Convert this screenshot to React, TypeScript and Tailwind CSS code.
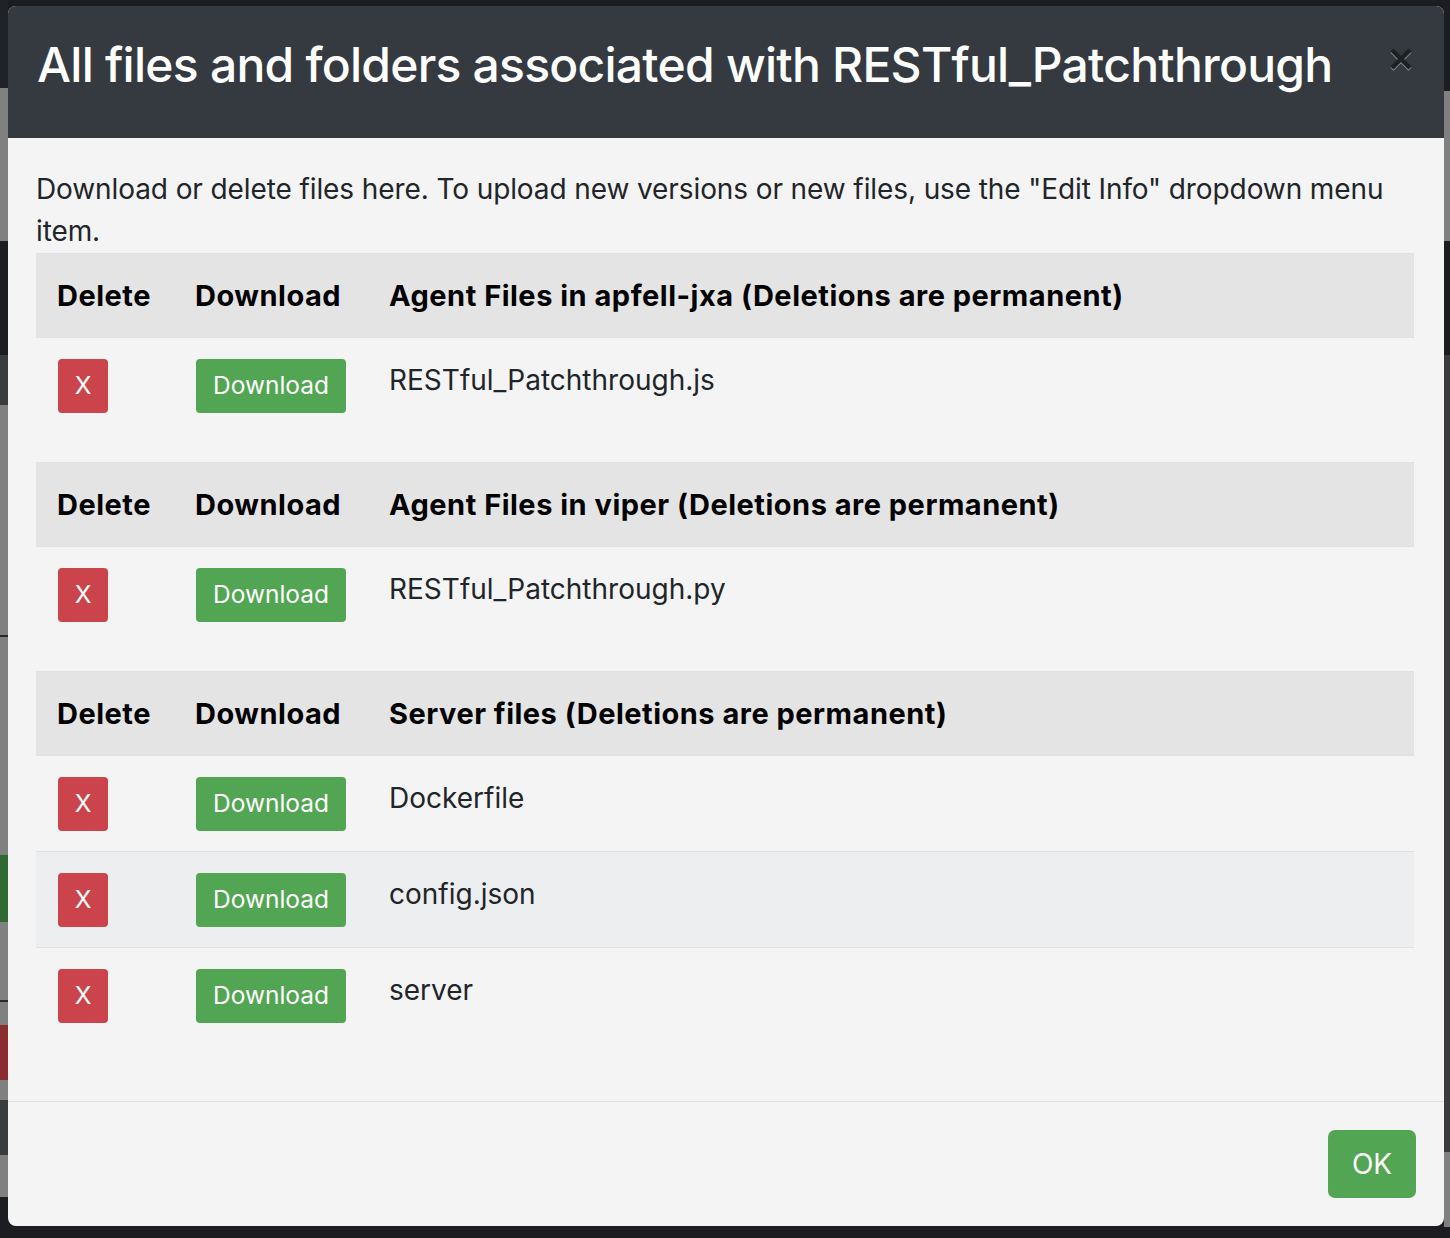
import React from "react";

const font = { fontFamily: "Inter, 'Noto Sans', sans-serif" };

type Section = { title: string; files: string[] };

const sections: Section[] = [
  { title: "Agent Files in apfell-jxa (Deletions are permanent)", files: ["RESTful_Patchthrough.js"] },
  { title: "Agent Files in viper (Deletions are permanent)", files: ["RESTful_Patchthrough.py"] },
  { title: "Server files (Deletions are permanent)", files: ["Dockerfile", "config.json", "server"] },
];

function FileTable({ section }: { section: Section }) {
  return (
    <table className="w-full border-collapse mb-[29px] table-fixed">
      <colgroup>
        <col className="w-[138px]" />
        <col className="w-[194px]" />
        <col />
      </colgroup>
      <thead>
        <tr className="bg-[#e4e4e4]">
          <th className="px-[21px] py-[20.5px] text-left font-bold text-[29px] tracking-[0.5px] leading-[42px] text-black border-t border-b border-[#dee2e6]">
            Delete
          </th>
          <th className="px-[21px] py-[20.5px] text-left font-bold text-[29px] tracking-[0.5px] leading-[42px] text-black border-t border-b border-[#dee2e6]">
            Download
          </th>
          <th className="px-[21px] py-[20.5px] text-left font-bold text-[29px] tracking-[0.5px] leading-[42px] text-black border-t border-b border-[#dee2e6] whitespace-nowrap">
            {section.title}
          </th>
        </tr>
      </thead>
      <tbody>
        {section.files.map((f, i) => (
          <tr key={f} className={i % 2 === 1 ? "bg-[#edeef0]" : ""}>
            <td className="px-[21px] py-[20.5px] align-top border-t border-[#dee2e6]">
              <button className="ml-[1px] w-[50px] h-[54px] flex items-center justify-center rounded-[4px] bg-[#cc444b] text-white text-[24.5px] leading-none">
                X
              </button>
            </td>
            <td className="px-[21px] py-[20.5px] align-top border-t border-[#dee2e6]">
              <button className="ml-[1px] w-[150px] h-[54px] flex items-center justify-center rounded-[4px] bg-[#52a552] text-white text-[24.5px] leading-none">
                Download
              </button>
            </td>
            <td className="px-[21px] py-[20.5px] align-top border-t border-[#dee2e6] text-[28px] leading-[42px] text-[#212529]">
              {f}
            </td>
          </tr>
        ))}
      </tbody>
    </table>
  );
}

export default function App() {
  return (
    <div style={font} className="relative w-[1450px] h-[1238px] bg-[#1c1d20] overflow-hidden">
      {/* dimmed page behind the modal */}
      <div className="flex h-full">
        <div className="w-[8px] flex flex-col">
          <div className="h-[88px] bg-[#1f2226]" />
          <div className="h-[153px] bg-[#808080]" />
          <div className="h-[114px] bg-[#1c1d20]" />
          <div className="h-[50px] bg-[#393c3f]" />
          <div className="h-[230px] bg-[#808080]" />
          <div className="h-[2px] bg-[#2a2a2a]" />
          <div className="h-[218px] bg-[#808080]" />
          <div className="h-[67px] bg-[#2f6a33]" />
          <div className="h-[78px] bg-[#808080]" />
          <div className="h-[2px] bg-[#2a2a2a]" />
          <div className="h-[23px] bg-[#808080]" />
          <div className="h-[55px] bg-[#8b2c31]" />
          <div className="h-[20px] bg-[#808080]" />
          <div className="h-[55px] bg-[#393c3f]" />
          <div className="h-[42px] bg-[#808080]" />
          <div className="flex-1 bg-[#1c1d20]" />
        </div>
        <div className="flex-1" />
        <div className="w-[6px] flex flex-col">
          <div className="h-[91px] bg-[#1c1d20]" />
          <div className="h-[150px] bg-[#808080]" />
          <div className="h-[114px] bg-[#1c1d20]" />
          <div className="h-[797px] bg-[#393c3f]" />
          <div className="h-[75px] bg-[#808080]" />
          <div className="flex-1 bg-[#1c1d20]" />
        </div>
      </div>

      {/* modal */}
      <div className="absolute left-[8px] top-[6px] w-[1436px] rounded-[8px] overflow-hidden bg-[#f4f4f4] flex flex-col">
        <div className="flex items-start bg-[#343a40] pl-[29px] pr-[30px] pt-[21px] h-[132px]">
          <h5 className="text-[48px] tracking-[-0.75px] leading-[75px] font-medium text-white whitespace-nowrap">
            All files and folders associated with RESTful_Patchthrough
          </h5>
          <button aria-label="Close" className="ml-auto shrink-0 mt-[20px] mr-[2px]">
            <svg width="22" height="24" viewBox="0 0 22 24">
              <g strokeWidth="4.5" strokeLinecap="butt">
                <path d="M2 3 L20 21 M20 3 L2 21" stroke="#8a8d90" transform="translate(0 1.2)" />
                <path d="M2 3 L20 21 M20 3 L2 21" stroke="#1e2124" />
              </g>
            </svg>
          </button>
        </div>
        <div className="pl-[28px] pr-[30px] pt-[30px] pb-[29px] h-[963px]">
          <p className="text-[28px] tracking-[-0.1px] leading-[42px] text-[#212529] mb-[1px]">
            Download or delete files here. To upload new versions or new files, use the "Edit Info" dropdown menu item.
          </p>
          {sections.map((s) => (
            <FileTable key={s.title} section={s} />
          ))}
        </div>
        <div className="border-t border-[#dee2e6] px-[28px] py-[28px] flex justify-end h-[125px]">
          <button className="w-[88px] h-[68px] flex items-center justify-center rounded-[7px] bg-[#52a552] text-white text-[28px] leading-none">
            OK
          </button>
        </div>
      </div>
    </div>
  );
}
